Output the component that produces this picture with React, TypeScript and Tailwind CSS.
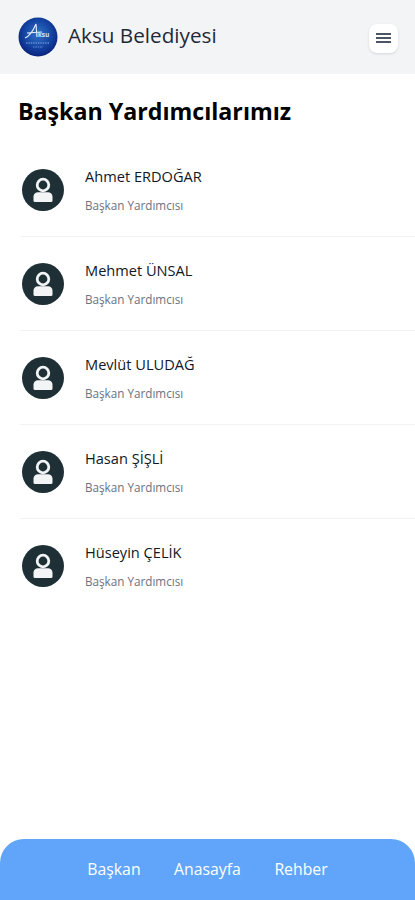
const people = ["Ahmet ERDOĞAR", "Mehmet ÜNSAL", "Mevlüt ULUDAĞ", "Hasan ŞİŞLİ", "Hüseyin ÇELİK"];

function Logo() {
  return (
    <svg viewBox="0 0 40 40" className="w-10 h-10 shrink-0">
      <defs>
        <radialGradient id="logoFill" cx="50%" cy="42%" r="60%">
          <stop offset="0%" stopColor="#2f74c8" />
          <stop offset="65%" stopColor="#123f9e" />
          <stop offset="100%" stopColor="#0a1f78" />
        </radialGradient>
      </defs>
      <circle cx="20" cy="20" r="19.5" fill="url(#logoFill)" />
      <path d="M7 21 C12 19 15 14 18 7 L19 20 M9 16 L24 15" fill="none" stroke="#e6eefb" strokeWidth="1.1" />
      <text x="20" y="20" fontSize="6.5" fontWeight="700" fill="#dbe7fa" fontFamily="Liberation Sans, sans-serif">ksu</text>
      <path d="M8 26 H32" stroke="#8fb0e6" strokeWidth="1.2" strokeDasharray="1.4 1" />
      <path d="M15 30 H25" stroke="#6f95d8" strokeWidth="1" strokeDasharray="1.4 1" />
    </svg>
  );
}

function UserAvatar() {
  return (
    <svg viewBox="0 0 42 42" className="w-[42px] h-[42px] shrink-0">
      <circle cx="21" cy="21" r="21" fill="#1e2f36" />
      <circle cx="21" cy="16" r="5.8" fill="none" stroke="#f3f4f6" strokeWidth="2.8" />
      <path d="M11.5 31.8 V27.5 C11.5 25 13.5 23.2 16 23.2 H26 C28.5 23.2 30.5 25 30.5 27.5 V31.8 C30.5 32.5 30 33 29.3 33 H12.7 C12 33 11.5 32.5 11.5 31.8 Z" fill="#f3f4f6" />
    </svg>
  );
}

export default function App() {
  return (
    <div className="min-h-[900px] flex flex-col bg-white font-['Open_Sans',sans-serif]">
      {/* Top bar */}
      <header className="h-[74px] bg-[#f3f4f6] flex items-center pl-[18px] pr-[17px]">
        <Logo />
        <span className="ml-[10px] text-[20.7px] text-[#1f2937] -mt-[3px]">Aksu Belediyesi</span>
        <button type="button" className="ml-auto mt-[2px] w-[29px] h-[29px] bg-white rounded-lg shadow-sm flex flex-col items-center justify-center gap-[2px]">
          <span className="w-[15px] h-[2px] bg-[#4b5563]" />
          <span className="w-[15px] h-[2px] bg-[#4b5563]" />
          <span className="w-[15px] h-[2px] bg-[#4b5563]" />
        </button>
      </header>

      <h1 className="mt-[20px] ml-[18px] text-[23.2px] leading-[34px] font-bold text-black">Başkan Yardımcılarımız</h1>

      {/* People list */}
      <ul className="mt-[15px] ml-[20px]">
        {people.map((name, i) => (
          <li key={name} className={`h-[94px] flex items-center pl-[2px] ${i < people.length - 1 ? "border-b border-[#f1f2f4]" : ""}`}>
            <UserAvatar />
            <div className="ml-[21px]">
              <p className="text-[14.6px] leading-[20px] text-[#111827]">{name}</p>
              <p className="mt-[10px] text-[11.7px] leading-[18px] text-[#6b7280]">Başkan Yardımcısı</p>
            </div>
          </li>
        ))}
      </ul>

      {/* Bottom nav */}
      <nav className="mt-auto h-[61px] bg-[#60a5fa] rounded-t-[24px] flex items-center justify-center gap-[33.5px] text-white text-[15.8px]">
        <span>Başkan</span>
        <span>Anasayfa</span>
        <span>Rehber</span>
      </nav>
    </div>
  );
}
